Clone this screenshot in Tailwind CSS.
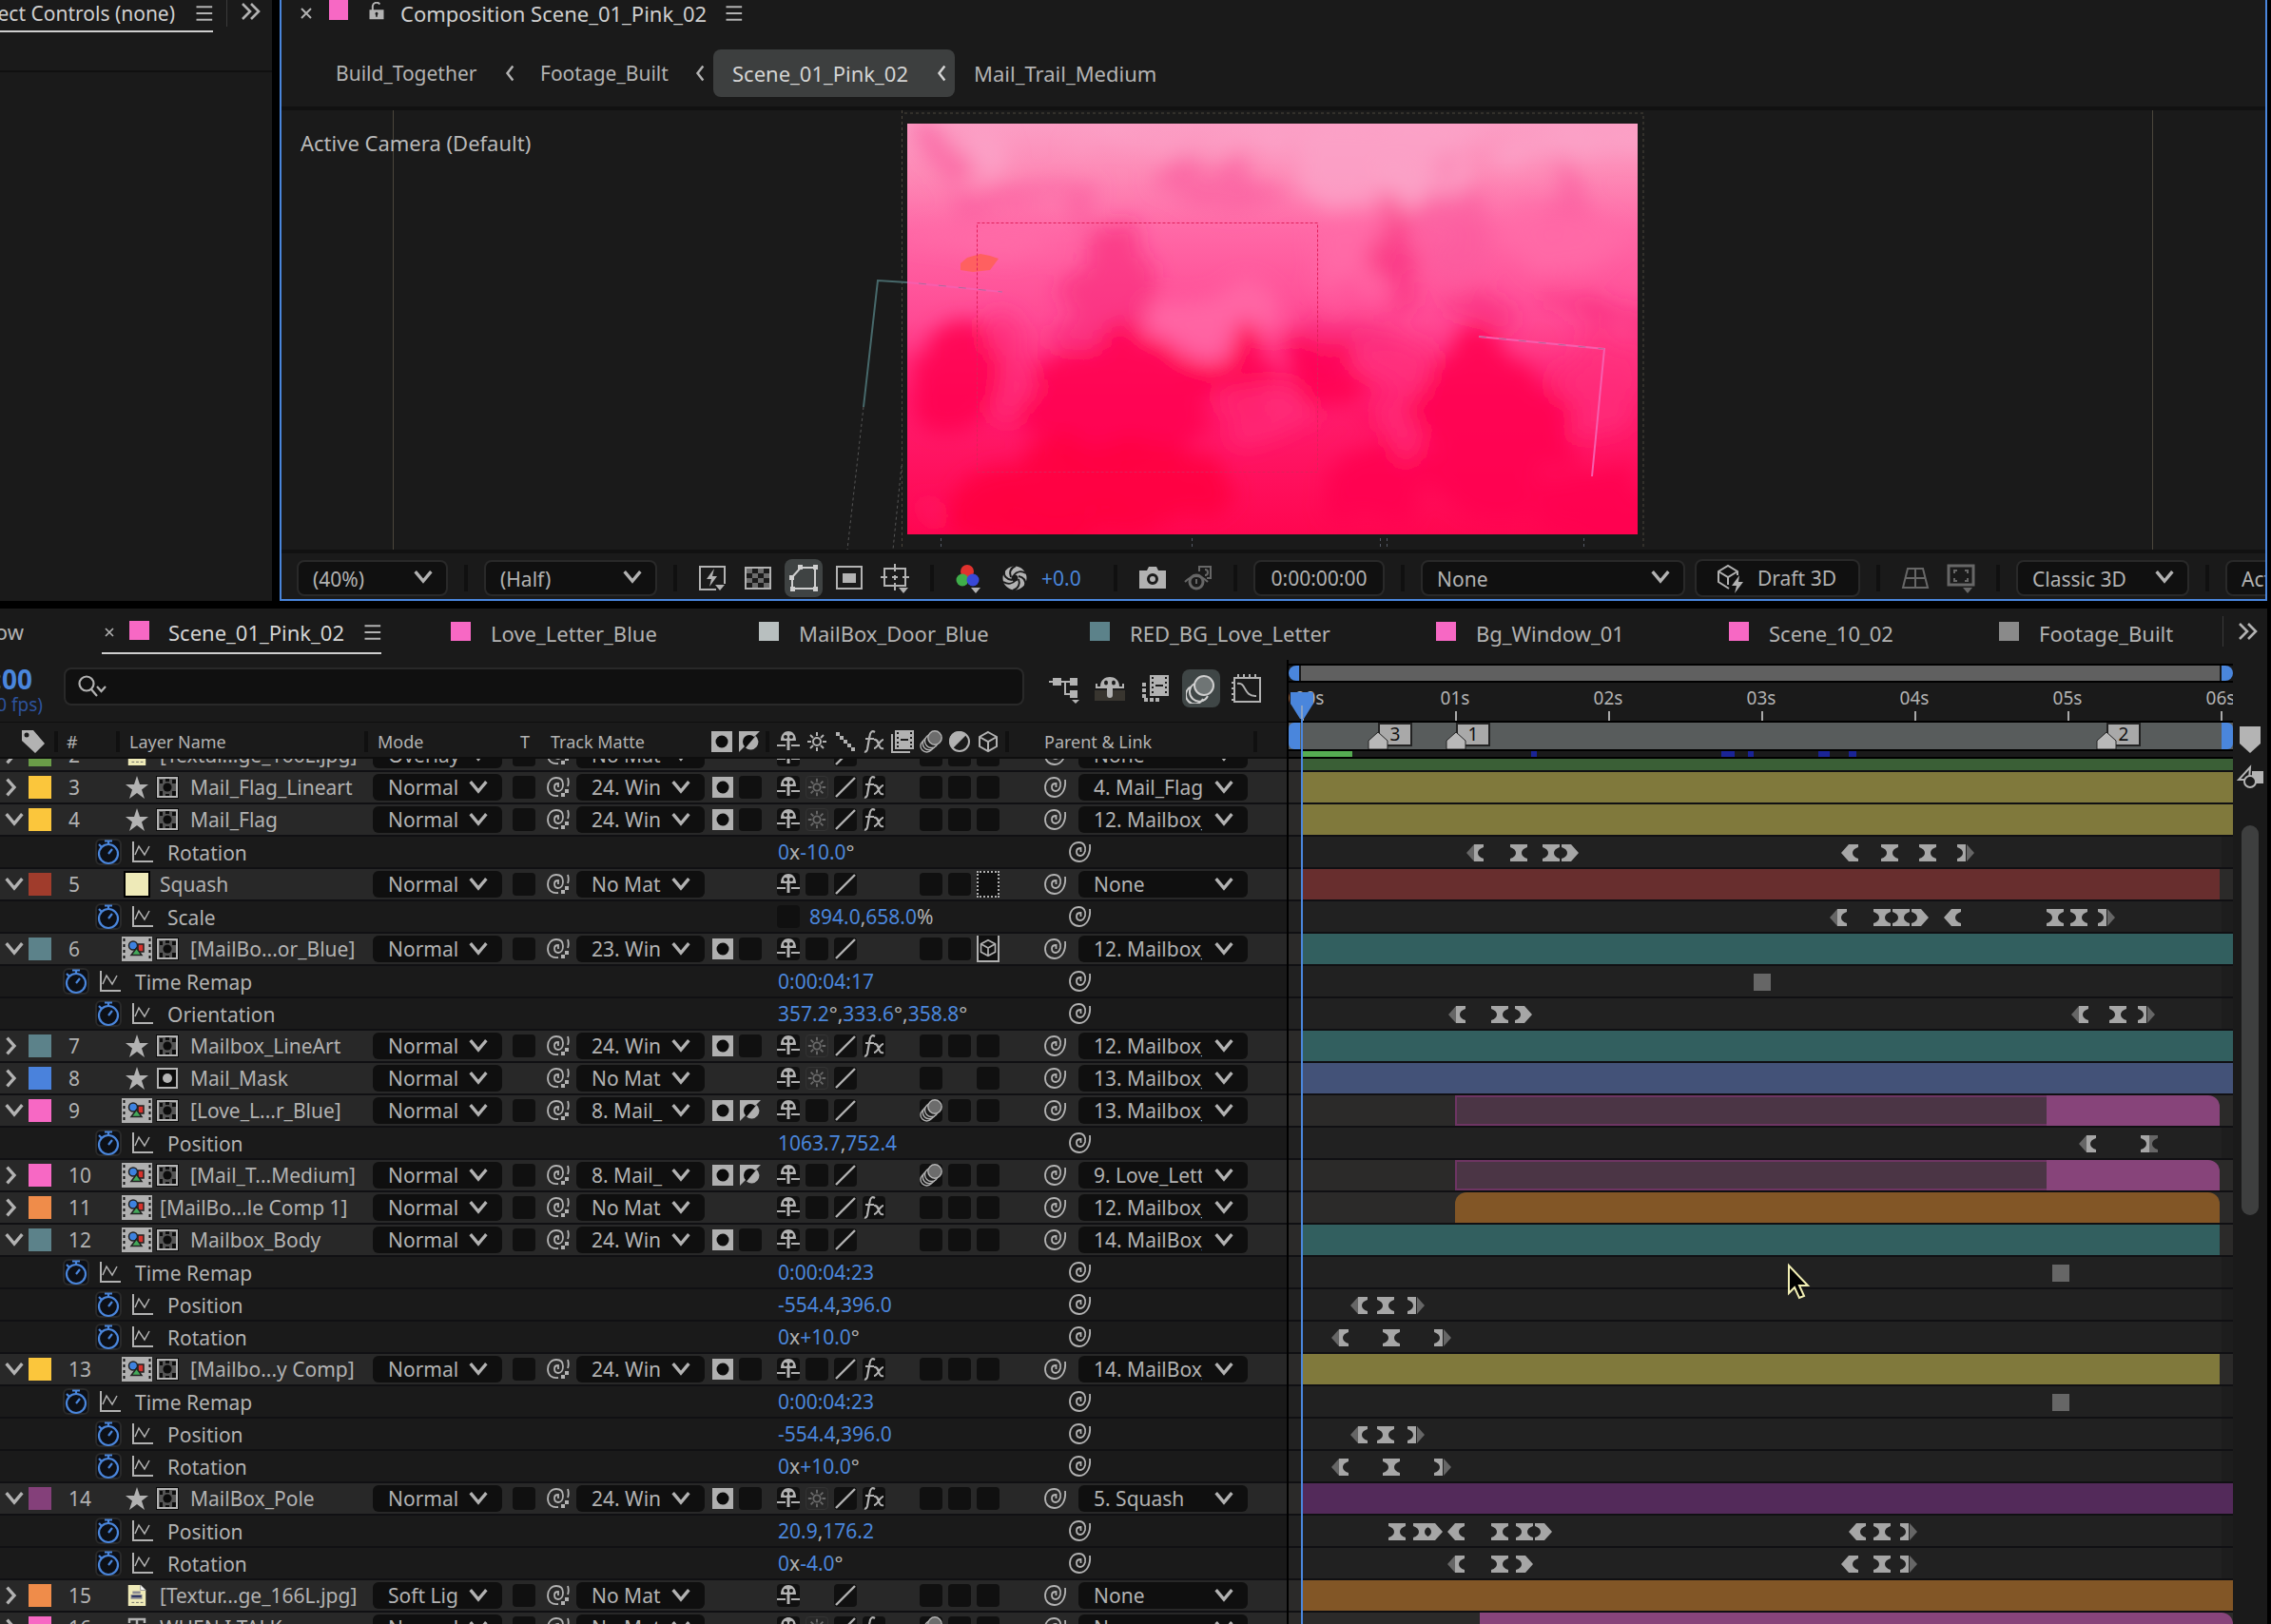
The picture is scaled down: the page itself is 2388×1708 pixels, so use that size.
<!DOCTYPE html>
<html lang="en">
<head>
  <meta charset="UTF-8" />
  <meta name="viewport" content="width=device-width, initial-scale=1.0" />
  <title>Scene_01_Pink_02</title>
  <script src="https://cdn.jsdelivr.net/npm/@tailwindcss/browser@4"></script>
</head>
<body class="bg-black text-[#b2b2b2] font-['Noto_Sans','Open_Sans',sans-serif] text-[21px] leading-7 h-screen overflow-hidden flex flex-col gap-2 whitespace-nowrap">

  <!-- ========== ICONS ========== -->
  <svg class="hidden" aria-hidden="true">
    <symbol id="down" viewBox="0 0 24 24"><path d="M2 5l10 12L22 5" fill="none" stroke="currentColor" stroke-width="4"/></symbol>
    <symbol id="right" viewBox="0 0 24 24"><path d="M3 2l9 10-9 10" fill="none" stroke="currentColor" stroke-width="4"/></symbol>
    <symbol id="left" viewBox="0 0 24 24"><path d="M16 3L9 12l7 9" fill="none" stroke="currentColor" stroke-width="3"/></symbol>
    <symbol id="more" viewBox="0 0 24 24"><path d="M3 4l8 8-8 8M12 4l8 8-8 8" fill="none" stroke="currentColor" stroke-width="2.6"/></symbol>
    <symbol id="menu" viewBox="0 0 24 24"><path d="M3 4h20M3 12h20M3 20h20" stroke="currentColor" stroke-width="2.4"/></symbol>
    <symbol id="close" viewBox="0 0 24 24"><path d="M6 6l12 12M18 6L6 18" stroke="currentColor" stroke-width="2.4"/></symbol>
    <symbol id="lock" viewBox="0 0 24 24"><path d="M7 11V5a5 5 0 0 1 9-2" fill="none" stroke="currentColor" stroke-width="2.4"/><path fill="currentColor" fill-rule="evenodd" d="M3 10h18v12H3zM12 13a2 2 0 0 0-1 3.600V19h2v-2.400A2 2 0 0 0 12 13z"/></symbol>
    <symbol id="search" viewBox="0 0 32 24"><g fill="none" stroke="currentColor" stroke-width="2.200"><circle cx="10" cy="9" r="7.500"/><path d="M15 15l6 7M21 12l4.500 5 4.500-5"/></g></symbol>
    <symbol id="star" viewBox="0 0 24 24"><path fill="currentColor" d="M12 0l3 9h9l-7 5.500 3 9.500-8-6-8 6 3-9.500L0 9h9z"/></symbol>
    <symbol id="mask" viewBox="0 0 24 24"><path fill="#0a0a0a" d="M0 0h24v24H0z"/><path d="M2 2h20v20H2z" fill="#555" stroke="#b4b4b4" stroke-width="2"/><path fill="#0c0c0c" d="M4 4h3v4H4zM10 3h4v3h-4zM17 4h4v4h-4zM4 16h3v5H4zM17 16h4v5h-4zM10 19h4v2h-4z"/><circle cx="12" cy="12" r="4.500" fill="#0c0c0c"/></symbol>
    <symbol id="maskdot" viewBox="0 0 24 24"><path d="M2 2h20v20H2z" fill="#0c0c0c" stroke="#b4b4b4" stroke-width="2"/><circle cx="12" cy="12" r="5" fill="#b4b4b4"/></symbol>
    <symbol id="comp" viewBox="0 0 32 26"><path fill="#b0b0b0" d="M0 0h32v26H0z"/><path fill="#111" d="M1.500 2h2v3h-2zM1.500 8h2v3h-2zM1.500 14h2v3h-2zM1.500 20h2v3h-2zM28.500 2h2v3h-2zM28.500 8h2v3h-2zM28.500 14h2v3h-2zM28.500 20h2v3h-2z"/><path d="M17 8h6v8h-6z" fill="#d8322c" stroke="#222" stroke-width="1.500"/><circle cx="12" cy="9.500" r="4.500" fill="#3d82e0" stroke="#222" stroke-width="1.500"/><path d="M15.500 12l5.500 7.500h-11z" fill="#44a85a" stroke="#222" stroke-width="1.500"/></symbol>
    <symbol id="jpg" viewBox="0 0 24 26"><path fill="#efebb8" d="M2 1h14l6 6v18H2z"/><path fill="#fff" stroke="#999" d="M16 1v6h6z"/><path fill="#8a8a92" d="M7 8h9v3H7zM5 12h13v5H5z"/><path fill="#26305e" d="M6 13h11v2H6z"/><path stroke="#666" d="M6 21h3M11 21h3M16 21h3"/></symbol>
    <symbol id="solid" viewBox="0 0 28 28"><path fill="#eeeab8" stroke="#000" stroke-width="2" d="M1 1h26v26H1z"/></symbol>
    <symbol id="text" viewBox="0 0 24 24"><path fill="none" stroke="currentColor" stroke-width="2.500" d="M4 7V3h16v4M12 3v18M8 21h8"/></symbol>
    <symbol id="watch" viewBox="0 0 28 28"><rect x="1" y="1" width="26" height="26" rx="5" fill="#0c0f16" stroke="#2a2a2a" stroke-width="2"/><g fill="none" stroke="#4a86dc" stroke-width="2.200"><circle cx="14" cy="16" r="10"/><path d="M10 2.500h8M14 3v4M4 6l3 3M14 16l4-5"/></g></symbol>
    <symbol id="graph" viewBox="0 0 24 24"><path fill="none" stroke="currentColor" stroke-width="2" d="M2 1v21h21"/><path fill="none" stroke="currentColor" stroke-width="1.500" d="M4 15l4-9 6 9 5-9"/></symbol>
    <symbol id="whip" viewBox="0 0 24 24"><path fill="none" stroke="currentColor" stroke-width="1.800" d="M22 4c1 9-3 18-11 18C5 22 1 18 1 12 1 6 5 2 10.500 2c5 0 7.500 4 6.500 9-1 3-3 5-5 5-3 0-4-2-4-4.500S10 8 12.500 8v4"/></symbol>
    <symbol id="whipm" viewBox="0 0 24 24"><path fill="none" stroke="currentColor" stroke-width="1.800" d="M12 21C5 22 1 18 1 12 1 6 5 2 10 2c5 0 7 3 7 7s-2 7-5 7-4-2-4-4.500S9 8 12 8v4M22 2c1 3 1 6 0 9"/><path fill="currentColor" d="M15 18h4v4h-4zM19 14h4v4h-4z"/></symbol>
    <symbol id="matte" viewBox="0 0 24 24"><path fill="#b0b0b0" d="M1 1h22v22H1z"/><ellipse cx="12" cy="12" rx="6.500" ry="6.500" fill="#0c0c0c"/></symbol>
    <symbol id="invert" viewBox="0 0 24 24"><path fill="#b0b0b0" d="M1 1h22L1 23z"/><circle cx="12" cy="12" r="7" fill="#0c0c0c"/><path fill="#b0b0b0" d="M18.500 6A8 8 0 0 1 8 18.500z"/></symbol>
    <symbol id="shy" viewBox="0 0 24 24"><path fill="currentColor" fill-rule="evenodd" d="M4 11C4 4 8 1 12 1s8 3 8 10zM7 7a2 2 0 0 0 4 0 2 2 0 0 0-4 0zM13 7a2 2 0 0 0 4 0 2 2 0 0 0-4 0z"/><path fill="currentColor" d="M10.500 11h3v10h-3zM0 15h9v2H0zM15 15h9v2h-9z"/></symbol>
    <symbol id="sun" viewBox="0 0 24 24"><circle cx="12" cy="12" r="4" fill="none" stroke="currentColor" stroke-width="2"/><path stroke="currentColor" stroke-width="2" d="M12 2v4M12 18v4M2 12h4M18 12h4M5 5l3 3M16 16l3 3M19 5l-3 3M8 16l-3 3"/></symbol>
    <symbol id="line" viewBox="0 0 24 24"><path stroke="currentColor" stroke-width="2.400" d="M2 22L22 2"/></symbol>
    <symbol id="steps" viewBox="0 0 24 24"><path fill="currentColor" d="M2 2h4v4H2zM6 6h4v4H6zM10 10h4v4h-4zM14 14h4v4h-4zM18 18h4v4h-4z"/></symbol>
    <symbol id="fx" viewBox="0 0 24 24"><path fill="none" stroke="currentColor" stroke-width="2.200" d="M13 2c-3-2-5 0-5.500 4L5 20c-.5 2-1.500 3-3 2.500M3 9h9M12 10c3-1 4 2 5 5s2 5 5 4M22 10c-4 0-6 9-10 9"/></symbol>
    <symbol id="film" viewBox="0 0 24 24"><path fill="none" stroke="currentColor" stroke-width="2" d="M1 4v19h19"/><path fill="currentColor" fill-rule="evenodd" d="M4 0h20v20H4zM6 2v2h2V2zM6 7v2h2V7zM6 12v2h2v-2zM6 16v2h2v-2zM20 2v2h2V2zM20 7v2h2V7zM20 12v2h2v-2zM20 16v2h2v-2zM10 9h8v2h-8z"/></symbol>
    <symbol id="blur" viewBox="0 0 24 24"><g fill="#1a1a1a" stroke="currentColor" stroke-width="1.400"><circle cx="7.500" cy="16.500" r="6.500"/><circle cx="10" cy="14" r="6.700"/><circle cx="12.500" cy="11.500" r="7"/></g><circle cx="16" cy="8" r="7.200" fill="#6c6c6c" stroke="currentColor" stroke-width="1.400"/></symbol>
    <symbol id="adjust" viewBox="0 0 24 24"><circle cx="12" cy="12" r="10" fill="none" stroke="currentColor" stroke-width="2"/><path fill="currentColor" d="M19 5A10 10 0 1 0 5 19z"/></symbol>
    <symbol id="cube" viewBox="0 0 24 24"><path fill="none" stroke="currentColor" stroke-width="2" d="M12 2l9 5v10l-9 5-9-5V7zM3 7l9 5 9-5M12 12v10"/></symbol>
    <symbol id="tag" viewBox="0 0 24 24"><path fill="currentColor" fill-rule="evenodd" d="M0 0h12l12 14-10 10L0 11zM5 2.500a2.500 2.500 0 1 0 0 5 2.500 2.500 0 0 0 0-5z"/></symbol>
    <!-- keyframes -->
    <symbol id="k-ez" viewBox="0 0 18 18"><path fill="#a6a6a6" d="M0 0h18v3q-6 2-6 6t6 6v3H0v-3q6-2 6-6T0 3z"/></symbol>
    <symbol id="k-ezh" viewBox="0 0 18 18"><path fill="#a6a6a6" d="M0 0h9v18H0v-3q6-2 6-6T0 3z"/><path fill="#666" d="M9 0h9v3q-6 2-6 6t6 6v3H9z"/></symbol>
    <symbol id="k-l" viewBox="0 0 18 18"><path fill="#a6a6a6" d="M8 0h10v3q-6 2-6 6t6 6v3H8L0 9z"/></symbol>
    <symbol id="k-lg" viewBox="0 0 18 18"><path fill="#666" d="M8 0v18L0 9z"/><path fill="#a6a6a6" d="M8 0h10v3q-6 2-6 6t6 6v3H8z"/></symbol>
    <symbol id="k-r" viewBox="0 0 18 18"><path fill="#a6a6a6" d="M10 0H0v3q6 2 6 6t-6 6v3h10l8-9z"/></symbol>
    <symbol id="k-rg" viewBox="0 0 18 18"><path fill="#666" d="M10 0v18l8-9z"/><path fill="#a6a6a6" d="M9 0H0v3q6 2 6 6t-6 6v3h9z"/></symbol>
    <symbol id="k-sq" viewBox="0 0 18 18"><path fill="#666" d="M0 0h18v18H0z"/></symbol>
  </svg>

  <!-- ========== TOP PANELS ========== -->
  <div class="flex gap-2 h-[632px] shrink-0 pr-1">

    <!-- Effect Controls -->
    <aside class="w-[286px] shrink-0 bg-[#1a1a1a] overflow-hidden">
      <div class="h-[76px] border-b-2 border-[#101010] flex items-start">
        <div class="w-[224px] h-[34px] border-b-2 border-[#cfcfcf] flex items-center justify-end gap-5 pb-1">
          <h2 class="text-[#cfcfcf]">Effect Controls (none)</h2>
          <button aria-label="Panel menu"><svg class="w-5 h-5"><use href="#menu"/></svg></button>
        </div>
        <span class="w-px h-7 bg-[#3a3a3a] ml-[14px] mr-[13px]"></span>
        <button aria-label="More panels"><svg class="w-6 h-6"><use href="#more"/></svg></button>
      </div>
    </aside>

    <!-- Composition viewer -->
    <main class="flex-1 min-w-0 bg-[#1a1a1a] border-2 border-t-0 border-[#4a86dc] flex flex-col">
      <div class="h-[28px] flex items-center pl-[16px] shrink-0 text-[22px]">
        <button aria-label="Close tab"><svg class="w-5 h-5"><use href="#close"/></svg></button>
        <span class="w-[20px] h-[22px] bg-[#f768c4] ml-[14px] mb-2"></span>
        <svg class="w-5 h-5 ml-5 mb-1"><use href="#lock"/></svg>
        <h2 class="text-[#cfcfcf] ml-[15px] w-[320px]">Composition Scene_01_Pink_02</h2>
        <button class="ml-5" aria-label="Panel menu"><svg class="w-5 h-5"><use href="#menu"/></svg></button>
      </div>
      <nav class="h-[84px] pt-6 flex items-start shrink-0 pl-[57px]">
        <a href="#" class="w-[173px] h-[50px] flex items-center">Build_Together</a>
        <a href="#" class="relative w-[224px] h-[50px] flex items-center pl-[42px]"><svg class="absolute left-0 w-5 h-5"><use href="#left"/></svg>Footage_Built</a>
        <a href="#" class="w-[254px] h-[50px] rounded-lg bg-[#3d3f3f] text-[#d4d4d4] text-[22px] flex items-center justify-between pl-5 pr-1 relative"><svg class="absolute -left-[24px] w-5 h-5 text-[#b2b2b2]"><use href="#left"/></svg>Scene_01_Pink_02<svg class="w-5 h-5"><use href="#left"/></svg></a>
        <a href="#" class="h-[50px] flex items-center pl-5 text-[22px]">Mail_Trail_Medium</a>
      </nav>

      <div class="relative flex-1 min-h-0 border-y-4 border-[#111]">
        <svg class="absolute inset-0 w-full h-full" viewBox="296 116 2086 462" preserveAspectRatio="xMidYMid slice">
          <defs>
            <linearGradient id="pink" x1="0" y1="0" x2="0" y2="1">
              <stop offset="0" stop-color="#fb9ec4"/><stop offset=".12" stop-color="#fd8ab6"/><stop offset=".26" stop-color="#ff68a6"/>
              <stop offset=".48" stop-color="#ff4a94"/><stop offset=".66" stop-color="#ff1e70"/><stop offset="1" stop-color="#ff0650"/>
            </linearGradient>
            <filter id="paint" x="-20%" y="-20%" width="140%" height="140%">
              <feTurbulence type="fractalNoise" baseFrequency=".014 .02" numOctaves="5" seed="4"/>
              <feDisplacementMap in="SourceGraphic" scale="90" xChannelSelector="R" yChannelSelector="G"/>
              <feGaussianBlur stdDeviation="11"/>
            </filter>
            <clipPath id="frame"><path d="M954 130h768v432H954z"/></clipPath>
          </defs>
          <g fill="none" stroke="#4b463c">
            <path d="M413.500 116v462M2263.500 116v462"/>
            <path stroke-dasharray="3 3" d="M948.500 116v462M951 119h777v459"/>
          </g>
          <path stroke="#555a66" stroke-dasharray="3 3" d="M989.500 566v12M1253.500 566v12M1451.500 566v12M1458.500 566v12M1665.500 566v12"/>
          <path fill="url(#pink)" d="M954 130h768v432H954z"/>
          <g clip-path="url(#frame)">
            <g filter="url(#paint)">
              <g fill="#fba4c8" fill-opacity=".8"><ellipse cx="1450" cy="165" rx="90" ry="50"/><ellipse cx="1660" cy="150" rx="80" ry="24"/><ellipse cx="1470" cy="215" rx="30" ry="32"/><ellipse cx="1020" cy="150" rx="26" ry="18"/><ellipse cx="1250" cy="150" rx="110" ry="14"/></g>
              <g fill="#fb5a9c" fill-opacity=".65"><ellipse cx="1070" cy="210" rx="70" ry="18"/><ellipse cx="1245" cy="190" rx="20" ry="24"/><ellipse cx="1300" cy="208" rx="50" ry="15"/><ellipse cx="1145" cy="215" rx="20" ry="30"/><ellipse cx="1530" cy="235" rx="34" ry="60"/><ellipse cx="1660" cy="215" rx="24" ry="34"/><ellipse cx="985" cy="160" rx="16" ry="24"/></g>
              <g fill="#ff6aa8" fill-opacity=".8"><ellipse cx="1270" cy="335" rx="70" ry="28"/><ellipse cx="1640" cy="250" rx="70" ry="28"/><ellipse cx="1420" cy="260" rx="36" ry="34"/><ellipse cx="1030" cy="250" rx="70" ry="14"/></g>
              <g fill="#f92a78" fill-opacity=".6"><ellipse cx="1165" cy="310" rx="50" ry="60"/><ellipse cx="1465" cy="270" rx="22" ry="50"/><ellipse cx="1550" cy="325" rx="40" ry="18"/><ellipse cx="1680" cy="330" rx="50" ry="20"/><ellipse cx="1410" cy="355" rx="60" ry="30"/></g>
              <g fill="#ff0050" fill-opacity=".85"><ellipse cx="1000" cy="400" rx="44" ry="60"/><ellipse cx="1180" cy="430" rx="100" ry="70"/><ellipse cx="1290" cy="400" rx="50" ry="34"/><ellipse cx="1395" cy="395" rx="44" ry="36"/><ellipse cx="1570" cy="450" rx="80" ry="96"/><ellipse cx="1440" cy="500" rx="60" ry="44"/><ellipse cx="1690" cy="540" rx="70" ry="46"/></g>
              <g fill="#ff2c7c" fill-opacity=".7"><ellipse cx="1060" cy="390" rx="28" ry="60"/><ellipse cx="1475" cy="400" rx="28" ry="70"/><ellipse cx="1330" cy="430" rx="50" ry="24"/><ellipse cx="1680" cy="400" rx="40" ry="50"/><ellipse cx="965" cy="545" rx="12" ry="24"/></g>
              <g fill="#ff0040" fill-opacity=".9"><ellipse cx="1150" cy="515" rx="150" ry="46"/><ellipse cx="1090" cy="550" rx="110" ry="24"/></g>
            </g>
          </g>
          <path fill="#ff6060" d="M1010 277l7-6 14-4 10 2 9 3-9 12-18 2-13-2z"/>
          <path fill="none" stroke="#e0205a" stroke-dasharray="3 2" d="M1027.500 234.500h358v262h-358z"/>
          <path fill="none" stroke="#47696b" stroke-width="2" d="M908 428l15-133 31 2"/>
          <path fill="none" stroke="#555" stroke-dasharray="3 3" d="M908 428l-17 150M948 490l-9 88"/>
          <path fill="none" stroke="#f65fae" stroke-width="2" d="M954 297l100 10M1555 354l132 13-13 134"/>
          <path fill="none" stroke="#b06a98" stroke-dasharray="8 13" d="M966 298l88 9M1555 354l132 13"/>
        </svg>
        <p class="absolute left-[20px] top-[20px] text-[#b9b9b9] text-[22px]">Active Camera (Default)</p>
      </div>

      <div id="viewer-bar" class="h-12 flex items-center pl-[16px] pt-1 overflow-hidden shrink-0"></div>
    </main>
  </div>

  <!-- ========== TIMELINE PANEL ========== -->
  <section class="flex-1 min-h-0 mr-1 bg-[#1a1a1a] flex flex-col">
    <div class="h-[54px] flex items-start shrink-0 text-[22px]">
      <div class="flex items-center h-12">
        <a href="#" class="w-[107px] flex"><span class="w-[25px] overflow-hidden flex justify-end">Window</span></a>
        <a href="#" class="w-[294px] h-12 border-b-2 border-[#cfcfcf] text-[#d4d4d4] flex items-center pt-1">
          <svg class="w-4 h-4 text-[#b2b2b2] mr-[13px]"><use href="#close"/></svg><span class="w-[21px] h-5 bg-[#f768c4] mr-5 mb-1"></span>
          <span class="flex-1">Scene_01_Pink_02</span><svg class="w-5 h-5 text-[#b2b2b2]"><use href="#menu"/></svg>
        </a>
      </div>
      <div id="tabs" class="flex flex-1 min-w-0 items-center h-12 ml-[73px]"></div>
      <span class="w-px h-8 mt-2 bg-[#3a3a3a] mr-[14px]"></span>
      <button class="mr-2 mt-3" aria-label="More tabs"><svg class="w-6 h-6"><use href="#more"/></svg></button>
    </div>

    <div class="flex flex-1 min-h-0">
      <!-- Layer list -->
      <div class="w-[1353px] shrink-0 flex flex-col">
        <div class="h-[66px] border-b border-[#0e0e0e] flex items-start pt-2 shrink-0">
          <div class="w-[67px] overflow-hidden shrink-0 h-[58px] flex flex-col gap-px">
            <div class="w-[34px] flex justify-end text-[28px] leading-6 font-bold text-[#4a86dc]">0:00:00:00</div>
            <div class="w-[45px] flex justify-end text-[19px] text-[#2d529c]">00000 (30.00 fps)</div>
          </div>
          <label class="flex items-center gap-3 w-[1010px] h-10 rounded-lg bg-[#101010] border-2 border-[#292929] px-3">
            <svg class="w-8 h-6"><use href="#search"/></svg>
            <input type="text" aria-label="Search layers" class="flex-1 bg-transparent outline-none" />
          </label>
          <div class="flex items-center gap-2 ml-[22px] h-11">
            <button class="w-10 h-10 flex items-center justify-center" aria-label="Composition mini-flowchart"><svg class="w-8 h-8" viewBox="0 0 32 32"><path fill="none" stroke="currentColor" stroke-width="2" d="M0 9h28M17 9v13h8"/><path fill="currentColor" d="M4 5h9v8H4zM22 5h8v8h-8zM22 18h8v8h-8zM24 28h8l-4 4z"/></svg></button>
            <button class="w-10 h-10 flex items-center justify-center" aria-label="Hide shy layers"><svg class="w-8 h-8" viewBox="0 0 32 32"><path fill="#38352f" d="M0 18h32v11H0z"/><path fill="currentColor" fill-rule="evenodd" d="M6 14C6 7 11 4 16 4s10 3 10 10h3v-3h2v5H1v-5h2v3zM10 10a2 2.500 0 0 0 4 0 2 2.500 0 0 0-4 0zM18 10a2 2.500 0 0 0 4 0 2 2.500 0 0 0-4 0zM13 16h6v7a3 3 0 0 1-6 0z"/></svg></button>
            <button class="w-10 h-10 flex items-center justify-center" aria-label="Frame blending"><svg class="w-7 h-7" viewBox="0 0 28 28"><path fill="none" stroke="currentColor" stroke-width="4" stroke-dasharray="4 2" d="M2 8v18h18"/><path fill="currentColor" fill-rule="evenodd" d="M8 0h20v22H8zM10 2v2h2V2zM10 7v2h2V7zM10 12v2h2v-2zM10 17v2h2v-2zM24 2v2h2V2zM24 7v2h2V7zM24 12v2h2v-2zM24 17v2h2v-2zM14 10h8v2h-8z"/></svg></button>
            <button class="w-10 h-10 rounded-lg bg-[#3f4646] text-[#cfcfcf] flex items-center justify-center" aria-label="Motion blur"><svg class="w-8 h-8" viewBox="0 0 32 32"><g fill="none" stroke="currentColor" stroke-width="2"><circle cx="19" cy="13" r="10" fill="#6f7575"/><path d="M9 11a10 10 0 1 0 14 13M6 14a9.500 9.500 0 1 0 12 13"/></g></svg></button>
            <button class="w-10 h-10 flex items-center justify-center" aria-label="Graph editor"><svg class="w-8 h-8" viewBox="0 0 32 32"><path fill="none" stroke="currentColor" stroke-width="2" d="M3 5h27v25H3zM7 5V1M13 5V1M19 5V1M25 5V1M3 10H0M3 16H0M3 22H0M3 28H0M6 11c10-2 6 14 20 13"/></svg></button>
          </div>
        </div>
        <div class="flex-1 min-h-0 overflow-hidden">
          <table class="table-fixed w-full border-separate border-spacing-0 -mt-5">
            <colgroup><col class="w-[62px]"><col class="w-[64px]"><col class="w-[261px]"><col class="w-[148px]"><col class="w-[35px]"><col class="w-[174px]"><col class="w-[66px]"><col class="w-[280px]"><col class="w-[263px]"></colgroup>
            <thead id="head" class="sticky top-0 z-10 text-[18px] text-left"></thead>
            <tbody id="layers"></tbody>
          </table>
        </div>
      </div>

      <!-- Tracks -->
      <div class="flex-1 min-w-0 border-l-2 border-black flex flex-col relative overflow-hidden">
        <div class="h-5 mt-1 border-y-2 border-black flex gap-[2px] shrink-0">
          <span class="w-[11px] bg-[#4a86dc] rounded-l-lg"></span><span class="flex-1 bg-[#606060]"></span><span class="w-3 bg-[#4a86dc] rounded-r-lg"></span>
        </div>
        <div id="ruler" class="relative h-10 shrink-0 text-[19px] leading-8"></div>
        <div id="workarea" class="relative h-8 border-y-2 border-black bg-[#585c5c] shrink-0 flex justify-between">
          <span class="w-3 bg-[#4a86dc] rounded-l-md"></span><span class="w-3 bg-[#4a86dc] rounded-r-md"></span>
        </div>
        <div id="cache" class="relative h-2 border-b-2 border-black shrink-0"></div>
        <div class="flex-1 min-h-0 overflow-hidden"><div id="tracks" class="-mt-5"></div></div>

        <!-- playhead -->
        <div class="absolute top-[34px] bottom-0 left-[2px] w-6 flex flex-col items-center">
          <svg class="w-6 h-7 shrink-0" viewBox="0 0 24 28"><path fill="#4a86dc" d="M0 0h24v12L14 28h-4L0 12z"/><path stroke="#c8c0b0" d="M12 14v14"/></svg>
          <span class="w-[2px] flex-1 bg-[#4a86dc]"></span>
        </div>
        <!-- mouse pointer -->
        <svg class="absolute left-[524px] top-[634px] w-7 h-10" viewBox="0 0 28 40"><path fill="#000" stroke="#f2efb4" stroke-width="2" d="M2 3v29l6-6 5 11 5-2-5-11h9z"/></svg>
      </div>

      <div class="w-9 shrink-0 flex flex-col items-center pt-[70px]">
        <svg class="w-6 h-7" viewBox="0 0 24 28"><path fill="#b4b4b4" d="M1 0h22v18L12 28 1 18z"/></svg>
        <svg class="w-7 h-7 mt-3" viewBox="0 0 28 28"><path fill="#b4b4b4" d="M16 7h12v13H16z"/><path fill="#1a1a1a" stroke="#b4b4b4" stroke-width="2" d="M14 3L2 16h11z"/><circle cx="14" cy="18" r="6" fill="#1a1a1a" stroke="#b4b4b4" stroke-width="2"/></svg>
        <span class="w-[18px] h-[410px] rounded-full bg-[#3e3f3f] mt-9"></span>
      </div>
    </div>
  </section>

  <script>
    const icon = (id, cls = "w-6 h-6") => `<svg class="${cls} shrink-0"><use href="#${id}"/></svg>`;
    const sep = '<span class="w-1 h-[22px] bg-[#101010] shrink-0"></span>';

    // Viewer toolbar
    const bsep = '<span class="w-1 h-7 mx-[17px] bg-[#101010] shrink-0"></span>';
    const drop = (label, value, w) => `<span class="relative ${w} h-[38px] shrink-0">
      <select aria-label="${label}" class="appearance-none w-full h-full rounded-lg bg-[#101010] border-2 border-[#292929] pl-[15px] pr-9 pt-px outline-none"><option>${value}</option></select>
      <svg class="absolute right-[16px] top-2 w-5 h-5 pointer-events-none"><use href="#down"/></svg></span>`;
    const tool = (label, body, cls = "") => `<button aria-label="${label}" class="w-10 h-10 rounded-lg flex items-center justify-center shrink-0 ${cls}"><svg class="w-8 h-8" viewBox="0 0 32 32" fill="none" stroke="currentColor" stroke-width="2">${body}</svg></button>`;
    document.getElementById("viewer-bar").innerHTML =
      drop("Magnification", "(40%)", "w-[159px]") + bsep + drop("Resolution", "(Half)", "w-[182px]") + bsep +
      '<div class="flex gap-2 shrink-0">' +
      tool("Fast previews", '<path d="M20 28H3V4h26v18"/><path fill="currentColor" stroke="none" d="M18 6l-8 11h5l-2 8 8-11h-5zM19 23h10l-5 6z"/>') +
      tool("Transparency grid", '<path d="M3 5h26v22H3z"/><path fill="#6c6c6c" stroke="none" d="M4 6h6v5H4zM16 6h6v5h-6zM10 11h6v5h-6zM22 11h6v5h-6zM4 16h6v5H4zM16 16h6v5h-6zM10 21h6v5h-6zM22 21h6v5h-6z"/>') +
      tool("Mask visibility", '<path d="M4 27V15L13 5h15v22z"/><path fill="currentColor" stroke="none" d="M2 25h5v5H2zM26 25h5v5h-5zM26 2h5v5h-5zM10 2h5v5h-5zM1 13h5v5H1z"/>', "bg-[#3f4343] text-[#cfcfcf]") +
      tool("Region of interest", '<path d="M3 4h26v23H3z"/><path fill="currentColor" stroke="none" d="M9 11h14v10H9z"/>') +
      tool("Guides", '<path d="M5 6h22v18H5zM16 1v8M16 13v5M13 15h6M16 21v8M1 15h7M24 15h7"/><path fill="currentColor" stroke="none" d="M20 26h10l-5 6z"/>') +
      '</div>' + bsep + '<div class="flex gap-2 shrink-0">' +
      tool("Channels", '<g stroke="none"><circle cx="14" cy="9" r="7" fill="#e0322e"/><circle cx="9" cy="18" r="6.500" fill="#3fae4a"/><circle cx="20" cy="18" r="6.500" fill="#3848d8"/><path fill="currentColor" d="M18 26h10l-5 6z"/></g>') +
      tool("Reset exposure", '<circle cx="16" cy="16" r="8" stroke-width="9"/><path stroke="#1a1a1a" d="M17 3c-6 3-7 7-5 12M28 11c-5-3-10-2-13 2M27 24c1-6-2-9-7-10M14 29c6-2 8-7 6-12M4 20c5 3 10 2 13-2M5 8c-1 6 2 9 8 10"/>') +
      '</div><span class="text-[#4a86dc] ml-2 w-[76px] shrink-0">+0.0</span>' + '<span class="w-1 h-7 mr-[17px] bg-[#101010] shrink-0"></span>' +
      '<div class="flex gap-2 shrink-0">' +
      tool("Take snapshot", '<path fill="currentColor" fill-rule="evenodd" stroke="none" d="M2 8h8l2-4h8l2 4h8v19H2zM16 11a6 6 0 1 0 0 12 6 6 0 0 0 0-12zM16 14a3 3 0 1 1 0 6 3 3 0 0 1 0-6z"/>') +
      tool("Show snapshot", '<circle cx="14" cy="20" r="7" stroke-width="3"/><path d="M2 20q12-12 24 0M14 17v5"/><path d="M17 9V4h12v12h-4M23 7a3 3 0 1 1 0 6" />', "text-[#676767]") +
      '</div>' + bsep +
      '<button class="w-[138px] h-[38px] rounded-lg bg-[#101010] border-2 border-[#292929] shrink-0">0:00:00:00</button>' + bsep +
      drop("3D view", "None", "w-[278px]") +
      `<button class="w-[174px] h-10 ml-[10px] rounded-lg bg-[#101010] border-2 border-[#292929] flex items-center gap-3 pl-5 shrink-0"><svg class="w-8 h-8" viewBox="0 0 32 32" fill="none" stroke="currentColor" stroke-width="2"><path d="M14 27L3 20V9l10-6 10 6v4M3 9l10 6 10-6M13 15v8"/><path fill="currentColor" stroke="none" d="M25 13l-8 11h5l-2 8 9-12h-5z"/></svg>Draft 3D</button>` + bsep +
      '<div class="flex gap-2 shrink-0">' +
      tool("Ground plane", '<path d="M8 6h16l5 20H3zM16 6v20M5 16h22"/>', "text-[#676767]") +
      tool("Extended viewer", '<path d="M3 3h26v20H3z" stroke-width="3"/><path d="M9 11V8h3M20 8h3v3M23 16v3h-3M12 19H9v-3"/><path fill="currentColor" stroke="none" d="M18 26h10l-5 6z"/>', "text-[#676767]") +
      '</div>' + bsep + drop("Renderer", "Classic 3D", "w-[182px]") + bsep + drop("Active view", "Active Camera", "w-[220px]");

    // Timeline tabs
    const tabs = [
      ["Love_Letter_Blue", "bg-[#f768c4]", "w-[324px]"],
      ["MailBox_Door_Blue", "bg-[#b8bfbf]", "w-[348px]"],
      ["RED_BG_Love_Letter", "bg-[#5c828a]", "w-[364px]"],
      ["Bg_Window_01", "bg-[#f768c4]", "w-[308px]"],
      ["Scene_10_02", "bg-[#f768c4]", "w-[284px]"],
      ["Footage_Built", "bg-[#8a8a8a]", "w-[200px]"],
    ];
    document.getElementById("tabs").innerHTML = tabs.map(([name, color, w]) =>
      `<a href="#" class="${w} flex items-center gap-[21px] pt-1 shrink-0"><span class="w-[21px] h-5 mb-1 ${color}"></span>${name}</a>`).join("");

    // Column heads
    const th = (body, cls = "") => `<th scope="col" class="h-[38px] p-0 font-normal bg-[#1a1a1a] border-b-2 border-[#0e0e0e]"><div class="flex items-center pt-1 ${cls}">${body}</div></th>`;
    document.getElementById("head").innerHTML = "<tr>" +
      th(icon("tag") + sep, "pl-[23px] gap-[10px]") + th("#" + sep, "pl-2 justify-between") +
      th("Layer Name" + sep, "pl-[10px] justify-between") + th("Mode", "pl-[10px]") + th("T", "pl-3") +
      th("Track Matte", "pl-[9px]") + th(icon("matte") + icon("invert") + sep, "pl-[3px] gap-[5px]") +
      th(["shy", "sun", "steps", "fx", "film", "blur", "adjust", "cube"].map(i => icon(i)).join("") + sep, "pl-[7px] gap-[6px]") +
      th("Parent & Link" + sep, "pl-2 pr-[31px] justify-between") + "</tr>";

    // Layers: n, open, swatch, icon, mask, name, mode, matte, toggles, switches, parent, bars
    // Switch letters: s shy, u sun, l line, f fx, b blur, c cube, d dotted box, _ empty cell, space none
    const C = { green: "bg-[#3a5f36]", olive: "bg-[#80793c]", red: "bg-[#682e2e]", teal: "bg-[#325f5f]", blue: "bg-[#435278]", dim: "bg-[#4b3545] border-2 border-r-0 border-[#6e3563]", pink: "bg-[#87447a] rounded-tr-xl", orange: "bg-[#825626]", comp: "bg-[#825626] rounded-t-xl", purple: "bg-[#532a5a]" };
    const teal = "bg-[#5c828a]", yellow = "bg-[#fbc63c]", pink = "bg-[#f768c4]", orange = "bg-[#ef8c4a]";
    const rows = [
      { n: 2, sw: "bg-[#6a9c48]", i: "jpg", name: "[Textur...ge_166L.jpg]", mode: "Overlay", matte: "No Mat", tg: "", s: "s l  ___", p: "None", bars: [[14, 993, C.green]] },
      { n: 3, sw: yellow, i: "star", m: "mask", name: "Mail_Flag_Lineart", mode: "Normal", matte: "24. Win", tg: "m_", s: "sulf ___", p: "4. Mail_Flag", bars: [[14, 993, C.olive]] },
      { n: 4, open: 1, sw: yellow, i: "star", m: "mask", name: "Mail_Flag", mode: "Normal", matte: "24. Win", tg: "m_", s: "sulf ___", p: "12. Mailbox_", bars: [[14, 993, C.olive]] },
      { prop: "Rotation", v: "0|x|-10.0|°", k: "lg196 ez242 ez276 r296 l590 ez632 ez672 rg712" },
      { n: 5, open: 1, sw: "bg-[#a03c2c]", i: "solid", name: "Squash", mode: "Normal", matte: "No Mat", tg: "", s: "s_l  __d", p: "None", bars: [[14, 979, C.red]] },
      { prop: "Scale", cell: 1, v: "894.0|,|658.0|%", k: "lg578 ez624 ez644 r664 l698 ez806 ez831 rg860" },
      { n: 6, open: 1, sw: teal, i: "comp", m: "mask", name: "[MailBo...or_Blue]", mode: "Normal", matte: "23. Win", tg: "m_", s: "s_l  __c", p: "12. Mailbox_", bars: [[14, 993, C.teal]] },
      { prop: "Time Remap", v: "0:00:04:17", k: "sq498" },
      { prop: "Orientation", v: "357.2|°,|333.6|°,|358.8|°", k: "lg177 ez222 r247 lg832 ez872 rg902" },
      { n: 7, sw: teal, i: "star", m: "mask", name: "Mailbox_LineArt", mode: "Normal", matte: "24. Win", tg: "m_", s: "sulf ___", p: "12. Mailbox_", bars: [[14, 993, C.teal]] },
      { n: 8, sw: "bg-[#4a82dc]", i: "star", m: "maskdot", name: "Mail_Mask", mode: "Normal", not: 1, matte: "No Mat", tg: "", s: "sul  _ _", p: "13. Mailbox_", bars: [[14, 993, C.blue]] },
      { n: 9, open: 1, sw: pink, i: "comp", m: "mask", name: "[Love_L...r_Blue]", mode: "Normal", matte: "8. Mail_", tg: "mi", s: "s_l  b__", p: "13. Mailbox_", bars: [[175, 797, C.dim], [797, 979, C.pink]] },
      { prop: "Position", v: "1063.7|,|752.4", k: "lg840 ezh905" },
      { n: 10, sw: pink, i: "comp", m: "mask", name: "[Mail_T...Medium]", mode: "Normal", matte: "8. Mail_", tg: "mi", s: "s_l  b__", p: "9. Love_Letter", bars: [[175, 797, C.dim], [797, 979, C.pink]] },
      { n: 11, sw: orange, i: "comp", name: "[MailBo...le Comp 1]", mode: "Normal", matte: "No Mat", tg: "", s: "s_lf ___", p: "12. Mailbox_", bars: [[175, 979, C.comp]] },
      { n: 12, open: 1, sw: teal, i: "comp", m: "mask", name: "Mailbox_Body", mode: "Normal", matte: "24. Win", tg: "m_", s: "s_l  ___", p: "14. MailBox_", bars: [[14, 979, C.teal]] },
      { prop: "Time Remap", v: "0:00:04:23", k: "sq812" },
      { prop: "Position", v: "-554.4|,|396.0", k: "lg74 ez102 rg134" },
      { prop: "Rotation", v: "0|x|+10.0|°", k: "lg54 ez108 rg162" },
      { n: 13, open: 1, sw: yellow, i: "comp", m: "mask", name: "[Mailbo...y Comp]", mode: "Normal", matte: "24. Win", tg: "m_", s: "s_lf ___", p: "14. MailBox_", bars: [[14, 979, C.olive]] },
      { prop: "Time Remap", v: "0:00:04:23", k: "sq812" },
      { prop: "Position", v: "-554.4|,|396.0", k: "lg74 ez102 rg134" },
      { prop: "Rotation", v: "0|x|+10.0|°", k: "lg54 ez108 rg162" },
      { n: 14, open: 1, sw: "bg-[#84407a]", i: "star", m: "mask", name: "MailBox_Pole", mode: "Normal", matte: "24. Win", tg: "m_", s: "sulf ___", p: "5. Squash", bars: [[14, 993, C.purple]] },
      { prop: "Position", v: "20.9|,|176.2", k: "ez114 ez140 r153 l176 ez222 ez248 r268 l598 ez624 rg652" },
      { prop: "Rotation", v: "0|x|-4.0|°", k: "lg176 ez222 r248 l590 ez624 rg652" },
      { n: 15, sw: orange, i: "jpg", name: "[Textur...ge_166L.jpg]", mode: "Soft Lig", matte: "No Mat", tg: "", s: "s l  ___", p: "None", bars: [[14, 993, C.orange]] },
      { n: 16, sw: pink, i: "text", name: "WHEN I TALK", mode: "Normal", matte: "No Mat", tg: "", s: "sulf b__", p: "None", bars: [[201, 993, C.pink]] },
    ];

    const cell = '<button aria-label="Switch" class="w-6 h-6 rounded-sm bg-[#101010] shrink-0"></button>';
    const sw = {
      " ": '<span class="w-6 shrink-0"></span>', "_": cell,
      m: icon("matte"), i: icon("invert"),
      s: on("shy"), u: `<button aria-label="Collapse" class="w-6 h-6 rounded-sm border border-[#333] text-[#6a6a6a] flex shrink-0">${icon("sun", "w-full h-full")}</button>`,
      l: on("line"), f: on("fx"), b: on("blur"), c: `<button aria-label="3D layer" class="w-6 h-7 border-2 border-t-0 border-[#b0b0b0] bg-[#101010] shrink-0">${icon("cube", "w-5 h-5")}</button>`,
      d: '<button aria-label="3D layer" class="w-6 h-7 border-2 border-dotted border-[#b0b0b0] bg-[#101010] shrink-0"></button>',
    };
    function on(id) { return `<button aria-label="${id}" class="w-6 h-6 rounded-sm bg-[#101010] shrink-0">${icon(id)}</button>`; }
    const pick = (label, value, w, pr) => `<span class="relative ${w} h-7 shrink-0">
      <select aria-label="${label}" class="appearance-none w-full h-full rounded-md bg-[#0f0f0f] pl-4 ${pr} outline-none"><option>${value}</option></select>
      <svg class="absolute right-[15px] top-1 w-5 h-5 pointer-events-none"><use href="#down"/></svg></span>`;
    const td = (body, cls = "", bg = "bg-[#282828]", span = 1) => `<td colspan="${span}" class="h-[34px] p-0 border-b-2 border-[#101013] ${bg}"><div class="h-8 flex items-center ${cls}">${body}</div></td>`;

    document.getElementById("layers").innerHTML = rows.map(r => {
      if (r.prop) {
        const pad = r.prop === "Time Remap" ? "pl-[66px]" : "pl-[100px]";
        const value = r.v.split("|").map((t, i) => i % 2 ? t : `<a href="#" class="text-[#4a86dc]">${t}</a>`).join("");
        return "<tr>" + td(`<button aria-label="Stopwatch">${icon("watch", "w-7 h-7")}</button>${icon("graph", "w-6 h-6 ml-[10px] mr-[14px]")}<span class="pt-[2px]">${r.prop}</span>`, pad, "bg-[#1a1a1a]", 7) +
          td((r.cell ? cell + '<span class="w-[10px]"></span>' : "") + `<span>${value}</span>`, r.cell ? "pl-[7px]" : "pl-2", "bg-[#1a1a1a]") +
          td(icon("whip"), "pl-[34px]", "bg-[#1a1a1a]") + "</tr>";
      }
      const icons = `<span class="w-8 flex justify-center shrink-0">${r.i === "comp" ? icon("comp", "w-8 h-[26px]") : r.i === "solid" ? icon("solid", "w-7 h-7") : icon(r.i)}</span>` +
        (r.m ? `<span class="ml-1 mr-3 flex">${icon(r.m)}</span>` : '<span class="w-2"></span>');
      return "<tr>" +
        td(`<button aria-label="Twirl" class="flex">${icon(r.open ? "down" : "right", "w-5 h-5")}</button><span class="w-6 h-6 ml-[5px] ${r.sw}"></span>`, "pl-[5px]") +
        td(r.n, "pl-[10px]") + td(icons + `<span>${r.name}</span>`, "pl-[2px]") +
        td(pick("Mode", r.mode, "w-[136px]", "pr-9"), "pl-[5px]") + td(r.not ? "" : cell, "pl-1") +
        td(icon("whipm") + pick("Track matte", r.matte, "w-[135px]", "pr-9"), "pl-[5px] gap-[7px]") +
        td([...r.tg].map(c => sw[c]).join(""), "pl-[4px] gap-[5px]") +
        td([...r.s].map(c => sw[c]).join(""), "pl-[7px] gap-[6px]") +
        td(icon("whip") + pick("Parent", r.p, "w-[178px]", "pr-12"), "pl-2 gap-3") + "</tr>";
    }).join("");

    // Track positions are stored on a 993 unit ruler, 161 units to the second
    const at = x => (x / 9.93).toFixed(3) + "%";
    document.getElementById("tracks").innerHTML = rows.map(r => {
      if (r.prop) {
        const keys = r.k.split(" ").map(k => {
          const [, type, x] = k.match(/([a-z]+)(\d+)/);
          return `<svg class="absolute top-2 w-[18px] h-[18px] -translate-x-1/2" style="left:${at(x)}"><use href="#k-${type}"/></svg>`;
        }).join("");
        return `<div class="relative h-[34px] border-b-2 border-[#101013] bg-[#212121] flex justify-end"><span class="w-3 bg-[#1d1d1d]"></span>${keys}</div>`;
      }
      const bars = r.bars.map(([a, b, c]) => `<span class="absolute inset-y-0 ${c}" style="left:${at(a)};width:${at(b - a)}"></span>`).join("");
      return `<div class="relative h-[34px] border-b-2 border-[#101013] bg-[#2b2a29]">${bars}</div>`;
    }).join("");

    document.getElementById("ruler").innerHTML = ["0:00s", "01s", "02s", "03s", "04s", "05s", "06s"].map((t, i) =>
      `<span class="absolute top-0 -translate-x-1/2" style="left:${at(14 + i * 161)}">${t}</span>` +
      `<span class="absolute bottom-0 w-[2px] h-[10px] bg-[#a9a9a9]" style="left:${at(14 + i * 161)}"></span>`).join("");

    document.getElementById("workarea").innerHTML += [[94, 3], [176, 1], [860, 2]].map(([x, n]) =>
      `<span class="absolute bottom-0 flex items-end -translate-x-[11px]" style="left:${at(x)}"><svg class="relative z-10 w-[22px] h-[18px]" viewBox="0 0 22 18"><path fill="#b8b8b8" stroke="#222" d="M1 18V9l10-9 10 9v9z"/></svg>` +
      `<b class="-ml-[11px] mb-[3px] w-[36px] h-[25px] bg-[#a9a9a9] border-2 border-[#222] text-[#111] text-[19px] leading-[21px] font-normal text-center">${n}</b></span>`).join("");

    document.getElementById("cache").innerHTML = [[14, 53, "bg-[#55ac52]"], [255, 6, "bg-[#1a2496]"], [455, 14, "bg-[#1a2496]"], [483, 6, "bg-[#1a2496]"], [557, 12, "bg-[#1a2496]"], [589, 8, "bg-[#1a2496]"]].map(([x, w, c]) =>
      `<span class="absolute inset-y-0 ${c}" style="left:${at(x)};width:${at(w)}"></span>`).join("");
  </script>
</body>
</html>
